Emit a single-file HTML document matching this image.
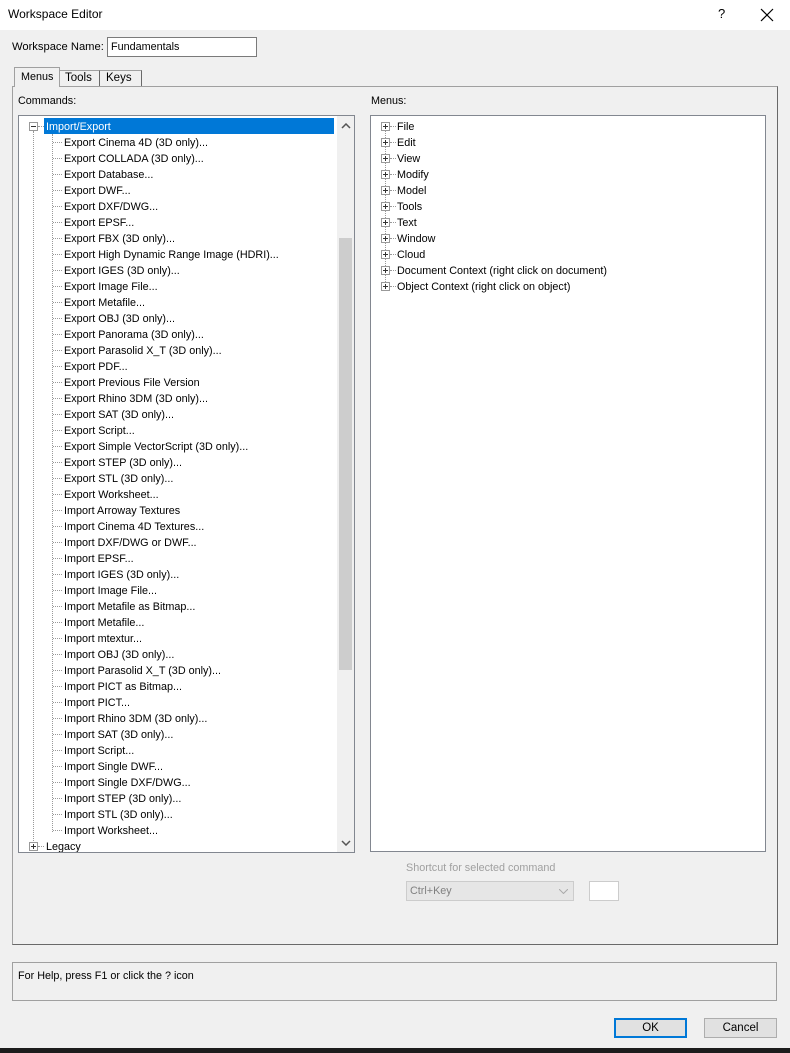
<!DOCTYPE html>
<html><head><style>
*{margin:0;padding:0;box-sizing:border-box}
body{width:790px;height:1053px;background:#f0f0f0;font-family:"Liberation Sans",sans-serif;font-size:10.8px;color:#000;position:relative;overflow:hidden}
.a{position:absolute;white-space:nowrap}
.title{left:0;top:0;width:790px;height:30px;background:#fff}
.row{position:absolute;height:16px;line-height:16px}
.dl{position:absolute;border-top:1px dotted #999;width:10px}
.pl{position:absolute;width:9px;height:9px;border:1px solid #999;background:#fff}
.pl:before{content:"";position:absolute;left:1px;top:3px;width:5px;height:1px;background:#333}
.pl.p:after{content:"";position:absolute;left:3px;top:1px;width:1px;height:5px;background:#333}
</style></head><body>
<div class="a title"></div>
<div class="a" style="left:8px;top:7px;font-size:12px">Workspace Editor</div>
<div class="a" style="left:718px;top:6px;font-size:13px">?</div>
<svg class="a" style="left:760px;top:8px" width="14" height="14"><path d="M1 1L13 13M13 1L1 13" stroke="#000" stroke-width="1.2"/></svg>

<div class="a" style="left:12px;top:41px;font-size:11.2px">Workspace Name:</div>
<div class="a" style="left:107px;top:37px;width:150px;height:20px;background:#fff;border:1px solid #7a7a7a;padding:3px 3px">Fundamentals</div>

<div class="a" style="left:12px;top:86px;width:766px;height:859px;border:1px solid #a0a0a0;border-right-color:#696969;border-bottom-color:#696969"></div>
<div class="a" style="left:14px;top:67px;width:46px;height:20px;background:#f0f0f0;border:1px solid #a0a0a0;border-bottom:none;padding:3px 6px">Menus</div>
<div class="a" style="left:60px;top:70px;width:40px;height:16px;border:1px solid #a0a0a0;border-bottom:none;border-left:none;border-right-color:#696969;padding:1px 5px;font-size:11.5px">Tools</div>
<div class="a" style="left:100px;top:70px;width:42px;height:16px;border:1px solid #a0a0a0;border-bottom:none;border-left:none;border-right-color:#696969;padding:1px 6px;font-size:11.5px">Keys</div>

<div class="a" style="left:18px;top:95px">Commands:</div>
<div class="a" style="left:371px;top:95px">Menus:</div>

<div class="a" style="left:18px;top:115px;width:337px;height:738px;background:#fff;border:1px solid #828790;overflow:hidden" id="L">
<div style="position:absolute;left:318px;top:0;width:17px;height:736px;background:#f0f0f0"></div>
<div style="position:absolute;left:320px;top:122px;width:13px;height:432px;background:#cdcdcd"></div>
<svg style="position:absolute;left:322px;top:7px" width="10" height="6"><path d="M1 5L5 1L9 5" stroke="#555" stroke-width="1.5" fill="none"/></svg>
<svg style="position:absolute;left:322px;top:724px" width="10" height="6"><path d="M1 1L5 5L9 1" stroke="#555" stroke-width="1.5" fill="none"/></svg>
<div style="position:absolute;left:25px;top:2px;width:290px;height:16px;background:#0078d7"></div>
<div class="pl" style="left:10px;top:6px"></div>
<div class="dl" style="left:19px;top:10px;width:6px"></div>
<div style="position:absolute;left:14px;top:15px;height:712px;border-left:1px dotted #999"></div>
<div style="position:absolute;left:33px;top:18px;height:698px;border-left:1px dotted #999"></div>
<div class="row" style="left:27px;top:3px;color:#fff">Import/Export</div>
<div id="items"></div>
<div class="pl p" style="left:10px;top:726px"></div>
<div class="dl" style="left:19px;top:730px;width:6px"></div>
<div class="row" style="left:27px;top:723px">Legacy</div>
</div>

<div class="a" style="left:370px;top:115px;width:396px;height:737px;background:#fff;border:1px solid #828790" id="R"></div>

<div class="a" style="left:406px;top:862px;color:#a0a0a0">Shortcut for selected command</div>
<div class="a" style="left:406px;top:881px;width:168px;height:20px;border:1px solid #ccc;background:#e6e6e6;color:#808080;padding:3px 3px">Ctrl+Key<svg style="position:absolute;right:5px;top:7px" width="9" height="5"><path d="M0 0L4.5 4.5L9 0" stroke="#aaa" fill="none"/></svg></div>
<div class="a" style="left:589px;top:881px;width:30px;height:20px;border:1px solid #ccc;background:#fff"></div>

<div class="a" style="left:12px;top:962px;width:765px;height:39px;border:1px solid #a0a0a0;padding:7px 5px">For Help, press F1 or click the ? icon</div>
<div class="a" style="left:614px;top:1018px;width:73px;height:20px;border:2px solid #0078d7;background:#e1e1e1;text-align:center;line-height:16px;font-size:11.5px">OK</div>
<div class="a" style="left:704px;top:1018px;width:73px;height:20px;border:1px solid #adadad;background:#e1e1e1;text-align:center;line-height:18px;font-size:11.5px">Cancel</div>
<div class="a" style="left:0;top:1048px;width:790px;height:5px;background:#1c1c1c"></div>

<script>
var it=["Export Cinema 4D (3D only)...","Export COLLADA (3D only)...","Export Database...","Export DWF...","Export DXF/DWG...","Export EPSF...","Export FBX (3D only)...","Export High Dynamic Range Image (HDRI)...","Export IGES (3D only)...","Export Image File...","Export Metafile...","Export OBJ (3D only)...","Export Panorama (3D only)...","Export Parasolid X_T (3D only)...","Export PDF...","Export Previous File Version","Export Rhino 3DM (3D only)...","Export SAT (3D only)...","Export Script...","Export Simple VectorScript (3D only)...","Export STEP (3D only)...","Export STL (3D only)...","Export Worksheet...","Import Arroway Textures","Import Cinema 4D Textures...","Import DXF/DWG or DWF...","Import EPSF...","Import IGES (3D only)...","Import Image File...","Import Metafile as Bitmap...","Import Metafile...","Import mtextur...","Import OBJ (3D only)...","Import Parasolid X_T (3D only)...","Import PICT as Bitmap...","Import PICT...","Import Rhino 3DM (3D only)...","Import SAT (3D only)...","Import Script...","Import Single DWF...","Import Single DXF/DWG...","Import STEP (3D only)...","Import STL (3D only)...","Import Worksheet..."];
var h="";it.forEach(function(t,i){var y=19+i*16;h+='<div class="dl" style="left:34px;top:'+(y+7)+'px;width:9px"></div><div class="row" style="left:45px;top:'+y+'px">'+t+'</div>';});
document.getElementById("items").outerHTML=h;
var m=["File","Edit","View","Modify","Model","Tools","Text","Window","Cloud","Document Context (right click on document)","Object Context (right click on object)"];
var r='<div style="position:absolute;left:14px;top:12px;height:160px;border-left:1px dotted #999"></div>';
m.forEach(function(t,i){var y=3+i*16;r+='<div class="pl p" style="left:10px;top:'+(y+3)+'px"></div><div class="dl" style="left:19px;top:'+(y+7)+'px;width:6px"></div><div class="row" style="left:26px;top:'+y+'px">'+t+'</div>';});
document.getElementById("R").innerHTML=r;
</script>
</body></html>
